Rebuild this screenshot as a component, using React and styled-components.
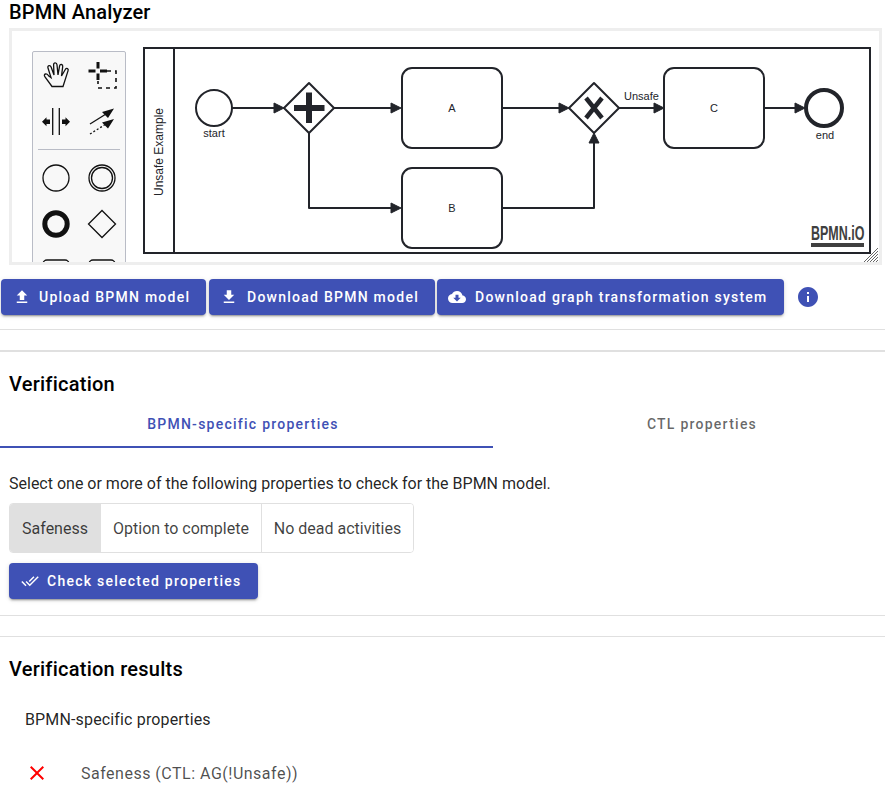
import React from "react";
import styled, { createGlobalStyle } from "styled-components";

const GlobalStyle = createGlobalStyle`
  html, body {
    margin: 0;
    padding: 0;
    height: 100%;
    overflow: hidden;
    background: #fff;
    font-family: Roboto, "Liberation Sans", sans-serif;
    color: rgba(0, 0, 0, 0.87);
  }
`;

const Page = styled.div`
  width: 885px;
`;

const Title = styled.h1`
  margin: 0;
  padding: 0 0 0 9px;
  height: 28px;
  font-size: 20px;
  line-height: 24px;
  font-weight: 500;
  letter-spacing: 0.15px;
  color: #000;
`;

const Canvas = styled.div`
  position: relative;
  box-sizing: border-box;
  width: 873px;
  height: 237px;
  margin-left: 9px;
  border: 3px solid #eee;
  overflow: hidden;
  background: #fff;
`;

const Palette = styled.div`
  position: absolute;
  left: 20px;
  top: 20px;
  box-sizing: border-box;
  width: 94px;
  height: 240px;
  background: #f8f8f8;
  border: 1px solid #b9bcc6;
  border-radius: 2px;
`;

const ToolGrid = styled.div`
  display: grid;
  grid-template-columns: 46px 46px;
  grid-auto-rows: ${(p) => p.$row}px;
`;

const ToolSeparator = styled.div`
  height: 1px;
  margin: 3px 5px 5px;
  background: #b9bcc6;
`;

const ToolIcon = styled.svg`
  display: block;
  width: 46px;
  height: ${(p) => p.$row}px;
  fill: none;
  stroke: #111;
  stroke-width: 1.3;
`;

const DiagramSvg = styled.svg`
  display: block;
  font-family: "Liberation Sans", Arial, sans-serif;
  font-size: 11px;
`;

const ButtonBar = styled.div`
  display: flex;
  align-items: center;
  height: 36px;
  margin-top: 14px;
  padding-left: 1px;
  gap: 3px;
`;

const Button = styled.button`
  display: inline-flex;
  align-items: center;
  box-sizing: border-box;
  height: 36px;
  width: ${(p) => p.$width}px;
  margin-right: ${(p) => p.$gapFix || 0}px;
  padding: 0 0 0 ${(p) => p.$pad || 12}px;
  border: 0;
  border-radius: 4px;
  background: #3f51b5;
  color: #fff;
  font-family: Roboto, "Liberation Sans", sans-serif;
  font-size: 14px;
  font-weight: 500;
  letter-spacing: 1.25px;
  white-space: nowrap;
  box-shadow: 0 3px 1px -2px rgba(0, 0, 0, 0.2), 0 2px 2px 0 rgba(0, 0, 0, 0.14),
    0 1px 5px 0 rgba(0, 0, 0, 0.12);
`;

const ButtonIcon = styled.svg`
  flex: none;
  width: 18px;
  height: 18px;
  margin-right: ${(p) => p.$gap || 8}px;
  fill: currentColor;
`;

const InfoButton = styled.svg`
  width: 24px;
  height: 24px;
  margin-left: 9px;
  fill: #3f51b5;
`;

const Rule = styled.hr`
  margin: ${(p) => p.$top || 0}px 0 0;
  border: 0;
  height: ${(p) => p.$size || 1}px;
  background: #e0e0e0;
`;

const SectionTitle = styled.h2`
  margin: 0;
  padding-left: 9px;
  padding-top: ${(p) => p.$top}px;
  font-size: 20px;
  line-height: 24px;
  font-weight: 500;
  letter-spacing: 0.25px;
  color: #000;
`;

const Tabs = styled.div`
  display: flex;
  height: 48px;
  margin-top: 4px;
`;

const Tab = styled.div`
  box-sizing: border-box;
  display: flex;
  align-items: center;
  justify-content: center;
  height: 48px;
  width: ${(p) => p.$width}px;
  padding: ${(p) => p.$padding};
  font-size: 14px;
  font-weight: 500;
  letter-spacing: 1.25px;
  color: ${(p) => (p.$active ? "#3f51b5" : "rgba(0, 0, 0, 0.6)")};
  border-bottom: 2px solid ${(p) => (p.$active ? "#3f51b5" : "transparent")};
`;

const Hint = styled.p`
  margin: 25px 0 0;
  padding-left: 9px;
  font-size: 16px;
  line-height: 22px;
  color: rgba(0, 0, 0, 0.87);
`;

const ToggleGroup = styled.div`
  display: inline-flex;
  box-sizing: border-box;
  height: 50px;
  margin: 8px 0 0 9px;
  border: 1px solid #e0e0e0;
  border-radius: 4px;
  overflow: hidden;
`;

const Toggle = styled.div`
  display: flex;
  align-items: center;
  justify-content: center;
  box-sizing: border-box;
  width: ${(p) => p.$width}px;
  font-size: 16px;
  color: rgba(0, 0, 0, 0.75);
  background: ${(p) => (p.$selected ? "#e0e0e0" : "#fff")};
  & + & {
    border-left: 1px solid #e0e0e0;
  }
`;

const CheckRow = styled.div`
  display: flex;
  height: 36px;
  margin: 10px 0 0 9px;
`;

const ResultsHeading = styled.div`
  margin-top: 27px;
  padding-left: 25px;
  font-size: 16px;
  line-height: 24px;
  letter-spacing: 0.15px;
  color: rgba(0, 0, 0, 0.87);
`;

const ResultRow = styled.div`
  display: flex;
  align-items: center;
  height: 24px;
  margin-top: 29px;
  padding-left: 25px;
  font-size: 16px;
  letter-spacing: 0.5px;
  color: rgba(0, 0, 0, 0.7);
`;

const CrossIcon = styled.svg`
  flex: none;
  width: 24px;
  height: 24px;
  margin-right: 32px;
  fill: #f00;
`;

const ICONS = {
  upload: "M9 16h6v-6h4l-7-7-7 7h4v6zm-4 2h14v2H5v-2z",
  download: "M19 9h-4V3H9v6H5l7 7 7-7zM5 18v2h14v-2H5z",
  cloud:
    "M19.35 10.04C18.67 6.59 15.64 4 12 4 9.11 4 6.6 5.64 5.35 8.04 2.34 8.36 0 10.91 0 14c0 3.31 2.69 6 6 6h13c2.76 0 5-2.24 5-5 0-2.64-2.05-4.78-4.65-4.96zM17 13l-5 5-5-5h3V9h4v4h3z",
  doneAll:
    "M18 7l-1.41-1.41-6.34 6.34 1.41 1.41L18 7zm4.24-1.41L11.66 16.17 7.48 12l-1.41 1.41L11.66 19l12-12-1.42-1.41zM.41 13.41L6 19l1.41-1.41L1.83 12 .41 13.41z",
  info: "M12 2C6.48 2 2 6.48 2 12s4.48 10 10 10 10-4.48 10-10S17.52 2 12 2zm1 15h-2v-6h2v6zm0-8h-2V7h2v2z",
  close:
    "M19 6.41L17.59 5 12 10.59 6.41 5 5 6.41 10.59 12 5 17.59 6.41 19 12 13.41 17.59 19 19 17.59 13.41 12z",
};

const INK = "#22242a";

const Arrow = ({ d, tip }) => (
  <>
    <path d={d} fill="none" stroke={INK} strokeWidth="2" strokeLinejoin="round" />
    <path d={tip} fill={INK} stroke={INK} strokeWidth="1" strokeLinejoin="round" />
  </>
);

const Task = ({ x, y, label }) => (
  <>
    <rect x={x} y={y} width="100" height="80" rx="10" fill="#fff" stroke={INK} strokeWidth="2" />
    <text x={x + 50} y={y + 44} textAnchor="middle" fill={INK}>
      {label}
    </text>
  </>
);

const Diamond = ({ cx, cy, children }) => (
  <>
    <path
      d={`M${cx} ${cy - 25}L${cx + 25} ${cy}L${cx} ${cy + 25}L${cx - 25} ${cy}Z`}
      fill="#fff"
      stroke={INK}
      strokeWidth="2"
      strokeLinejoin="round"
    />
    {children}
  </>
);

const Diagram = () => (
  <DiagramSvg width="867" height="231" viewBox="12 31 867 231">
    <rect x="144" y="48" width="726" height="205" fill="#fff" stroke={INK} strokeWidth="2" />
    <path d="M174 48V253" stroke={INK} strokeWidth="2" />
    <text
      transform="translate(163 152) rotate(-90)"
      textAnchor="middle"
      fontSize="12"
      fill={INK}
    >
      Unsafe Example
    </text>

    <circle cx="214" cy="108" r="18" fill="#fff" stroke={INK} strokeWidth="2" />
    <text x="214" y="137" textAnchor="middle" fill={INK}>
      start
    </text>

    <Arrow d="M232 108H275" tip="M284 108L274 103V113Z" />
    <Arrow d="M334 108H392" tip="M401 108L391 103V113Z" />
    <Arrow d="M309 132V208H392" tip="M401 208L391 203V213Z" />
    <Arrow d="M502 108H560" tip="M569 108L559 103V113Z" />
    <Arrow d="M502 208H594V142" tip="M594 133L589 143H599Z" />
    <Arrow d="M619 108H655" tip="M664 108L654 103V113Z" />
    <Arrow d="M764 108H796" tip="M805 108L795 103V113Z" />

    <Diamond cx={309} cy={108}>
      <path d="M309 92.5V123M294 108H324.5" stroke={INK} strokeWidth="6" fill="none" />
    </Diamond>
    <Diamond cx={594} cy={108}>
      <path d="M586 98L602 118M602 98L586 118" stroke={INK} strokeWidth="4.5" fill="none" />
    </Diamond>

    <Task x={402} y={68} label="A" />
    <Task x={402} y={168} label="B" />
    <Task x={664} y={68} label="C" />

    <text x="624" y="100" fill={INK}>
      Unsafe
    </text>

    <circle cx="824" cy="108" r="18" fill="#fff" stroke={INK} strokeWidth="4" />
    <text x="825" y="139" textAnchor="middle" fill={INK}>
      end
    </text>

    <text
      transform="translate(811 240) scale(0.595 1)"
      fontSize="21"
      fontWeight="700"
      fill="#404040"
    >
      BPMN.iO
    </text>
    <rect x="811" y="243" width="53" height="4" fill="#404040" />

    <path
      d="M864 262L878 248M867 262L878 251M870 262L878 254M873 262L878 257M876 262L878 260"
      stroke="#666"
      strokeWidth="1"
      fill="none"
    />
  </DiagramSvg>
);

const ToolPalette = () => (
  <Palette>
    <ToolGrid $row={47}>
      <ToolIcon $row={47} viewBox="0 0 46 47">
        <path d="M19 34.5L12 25q-1.5-2.5.5-3 1.5-.3 3 1.7l2.5 1.8L15 16q-.6-2 1-2.4 1.5-.3 2.2 1.6L21 23l-.4-10.2q0-2 1.6-2t1.8 2L25 23l1.6-9q.4-1.8 1.9-1.5t1.2 2.1L28.5 24l3.8-6.5q.9-1.6 2.2-.9 1.2.7.5 2.3L30 34.5Z" />
      </ToolIcon>
      <ToolIcon $row={47} viewBox="0 0 46 47">
        <path d="M9.5 19H16.5M21 19H28M19 10V16.5M19 21.5V28" strokeWidth="3" />
        <path d="M28 19H37V36H19V29" strokeWidth="1.6" strokeDasharray="4 4" />
      </ToolIcon>
      <ToolIcon $row={47} viewBox="0 0 46 47">
        <path d="M19.7 9V36M26.3 9V36" />
        <path d="M9 22.7L13.5 18.2V20.5H17V25H13.5V27.2Z M37 22.7L32.5 18.2V20.5H29V25H32.5V27.2Z" fill="#111" stroke="none" />
      </ToolIcon>
      <ToolIcon $row={47} viewBox="0 0 46 47">
        <path d="M11 25L27 15" />
        <path d="M11 35L27 25" strokeDasharray="2 2" />
        <path d="M35 9.5L23 13L29 19Z M35 20L23 23.5L29 29.5Z" fill="#111" stroke="none" />
      </ToolIcon>
    </ToolGrid>
    <ToolSeparator />
    <ToolGrid $row={46}>
      <ToolIcon $row={46} viewBox="0 0 46 46">
        <circle cx="23" cy="23" r="13" />
      </ToolIcon>
      <ToolIcon $row={46} viewBox="0 0 46 46">
        <circle cx="23" cy="23" r="13" />
        <circle cx="23" cy="23" r="10.5" />
      </ToolIcon>
      <ToolIcon $row={46} viewBox="0 0 46 46">
        <circle cx="23" cy="23" r="11.2" strokeWidth="5" />
      </ToolIcon>
      <ToolIcon $row={46} viewBox="0 0 46 46">
        <path d="M23 9.5L36.5 23L23 36.5L9.5 23Z" />
      </ToolIcon>
      <ToolIcon $row={46} viewBox="0 0 46 46">
        <rect x="10" y="13" width="26" height="20" rx="4" />
      </ToolIcon>
      <ToolIcon $row={46} viewBox="0 0 46 46">
        <rect x="10" y="13" width="26" height="20" rx="4" />
      </ToolIcon>
    </ToolGrid>
  </Palette>
);

const Icon = ({ name, as: Comp = ButtonIcon, ...rest }) => (
  <Comp viewBox="0 0 24 24" {...rest}>
    <path d={ICONS[name]} />
  </Comp>
);

const App = () => (
  <Page>
    <GlobalStyle />
    <Title>BPMN Analyzer</Title>
    <Canvas>
      <Diagram />
      <ToolPalette />
    </Canvas>

    <ButtonBar>
      <Button $width={205}>
        <Icon name="upload" />
        Upload BPMN model
      </Button>
      <Button $width={226} $pad={11} $gapFix={-1}>
        <Icon name="download" $gap={9} />
        Download BPMN model
      </Button>
      <Button $width={347} $pad={11}>
        <Icon name="cloud" $gap={9} />
        Download graph transformation system
      </Button>
      <Icon as={InfoButton} name="info" />
    </ButtonBar>

    <Rule $top={14} />
    <Rule $top={20} $size={2} />

    <SectionTitle $top={20}>Verification</SectionTitle>
    <Tabs>
      <Tab $active $width={493} $padding="2px 7px 0 0">
        BPMN-specific properties
      </Tab>
      <Tab $width={392} $padding="2px 0 0 26px">
        CTL properties
      </Tab>
    </Tabs>

    <Hint>Select one or more of the following properties to check for the BPMN model.</Hint>
    <ToggleGroup>
      <Toggle $selected $width={90}>Safeness</Toggle>
      <Toggle $width={161}>Option to complete</Toggle>
      <Toggle $width={152}>No dead activities</Toggle>
    </ToggleGroup>
    <CheckRow>
      <Button $width={249}>
        <Icon name="doneAll" />
        Check selected properties
      </Button>
    </CheckRow>

    <Rule $top={16} />
    <Rule $top={20} />

    <SectionTitle $top={20}>Verification results</SectionTitle>
    <ResultsHeading>BPMN-specific properties</ResultsHeading>
    <ResultRow>
      <Icon as={CrossIcon} name="close" />
      Safeness (CTL: AG(!Unsafe))
    </ResultRow>
  </Page>
);

export default App;
